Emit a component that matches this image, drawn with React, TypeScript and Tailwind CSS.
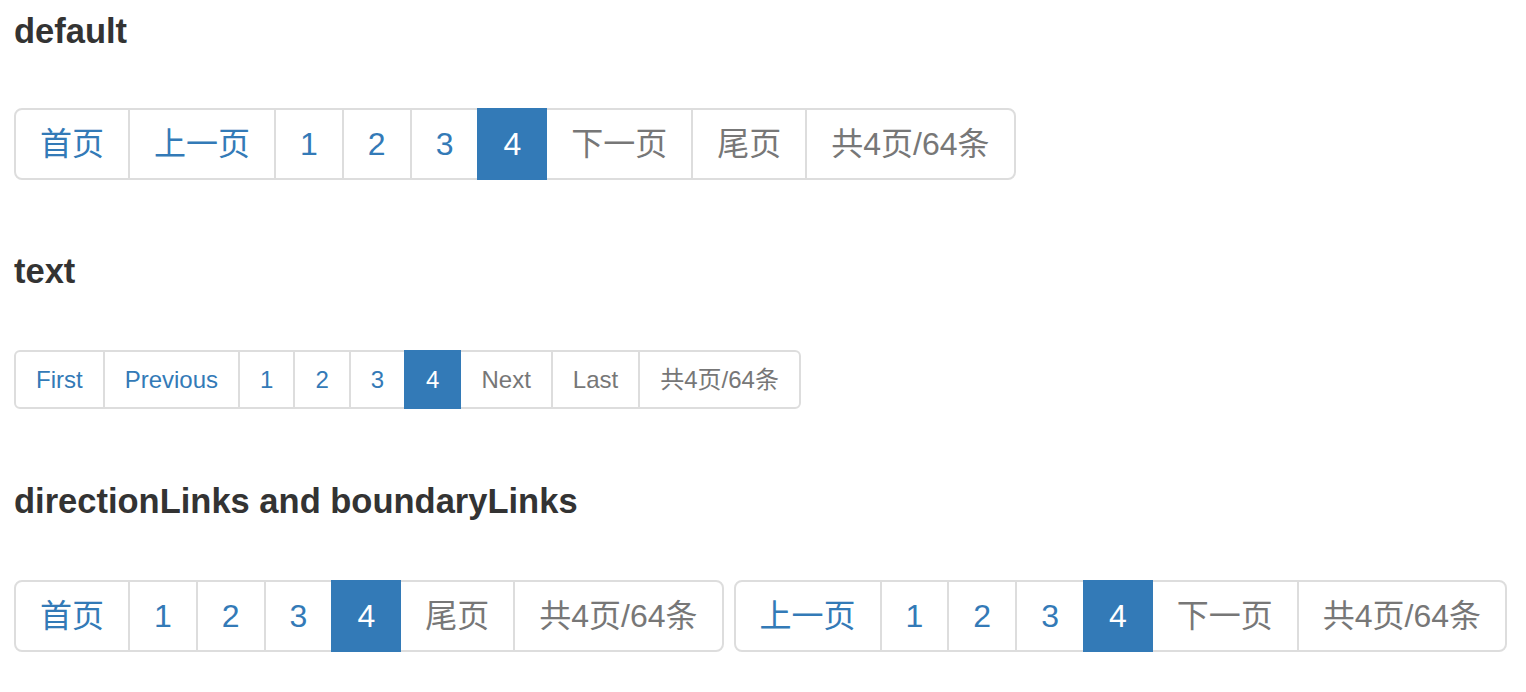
type Item = { label: string; kind: 'link' | 'active' | 'disabled' }

const font = { fontFamily: '"Liberation Sans", "Noto Sans CJK SC", sans-serif' }

function Pager({ items, size }: { items: Item[]; size: 'md' | 'sm' }) {
  const cell =
    size === 'md'
      ? 'px-[24px] py-[12px] text-[32px] leading-[44px] first:rounded-l-[8px] last:rounded-r-[8px]'
      : 'px-[20px] py-[10px] text-[24px] leading-[35px] first:rounded-l-[6px] last:rounded-r-[6px]'
  return (
    <ul className="flex">
      {items.map((it, i) => (
        <li
          key={i}
          className={`-ml-[2px] first:ml-0 border-2 whitespace-nowrap ${cell} ${
            it.kind === 'active'
              ? 'relative z-10 bg-[#337ab7] border-[#337ab7] text-white'
              : it.kind === 'link'
                ? 'bg-white border-[#ddd] text-[#337ab7]'
                : 'bg-white border-[#ddd] text-[#777]'
          }`}
        >
          {it.label}
        </li>
      ))}
    </ul>
  )
}

const L = (label: string): Item => ({ label, kind: 'link' })
const D = (label: string): Item => ({ label, kind: 'disabled' })
const A = (label: string): Item => ({ label, kind: 'active' })

export default function App() {
  return (
    <div className="min-h-screen bg-white pl-[14px] text-[#333]" style={font}>
      <h4 className="pt-[11px] text-[34.5px] leading-[40px] font-bold">default</h4>
      <div className="mt-[57px]">
        <Pager
          size="md"
          items={[L('首页'), L('上一页'), L('1'), L('2'), L('3'), A('4'), D('下一页'), D('尾页'), D('共4页/64条')]}
        />
      </div>

      <h4 className="mt-[71px] text-[34.5px] leading-[40px] font-bold">text</h4>
      <div className="mt-[59px]">
        <Pager
          size="sm"
          items={[L('First'), L('Previous'), L('1'), L('2'), L('3'), A('4'), D('Next'), D('Last'), D('共4页/64条')]}
        />
      </div>

      <h4 className="mt-[72px] text-[34.5px] leading-[40px] font-bold">directionLinks and boundaryLinks</h4>
      <div className="mt-[59px] flex gap-[10px]">
        <Pager size="md" items={[L('首页'), L('1'), L('2'), L('3'), A('4'), D('尾页'), D('共4页/64条')]} />
        <Pager size="md" items={[L('上一页'), L('1'), L('2'), L('3'), A('4'), D('下一页'), D('共4页/64条')]} />
      </div>
    </div>
  )
}
